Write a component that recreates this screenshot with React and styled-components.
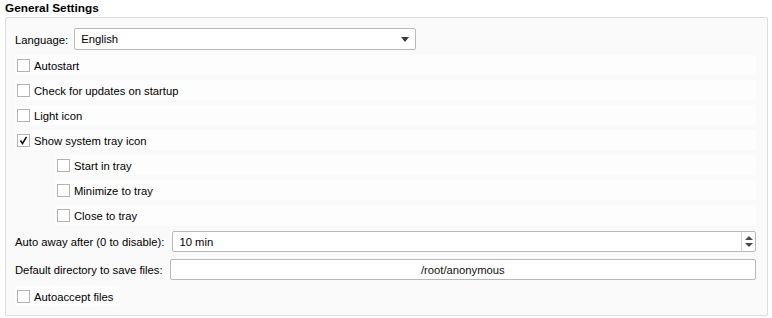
import React from 'react';
import styled, { createGlobalStyle } from 'styled-components';

const GlobalStyle = createGlobalStyle`
  html, body {
    margin: 0;
    padding: 0;
    background: #ffffff;
  }
  body {
    font-family: "Liberation Sans", Arial, sans-serif;
    font-size: 11.25px;
    color: #000;
  }
`;

const Page = styled.div`
  width: 772px;
  height: 318px;
  padding: 0 4px 0 5px;
  box-sizing: border-box;
`;

const Title = styled.div`
  height: 17px;
  line-height: 16px;
  font-weight: bold;
  font-size: 11.8px;
`;

const GroupBox = styled.div`
  height: 299px;
  box-sizing: border-box;
  border: 1px solid #dcdcdc;
  border-radius: 2px;
  background: #fafafa;
  padding: 10px 11px 0 9px;
  display: flex;
  flex-direction: column;
  gap: 5px;
`;

const FieldRow = styled.div`
  display: flex;
  align-items: center;
  height: 22px;
  gap: ${(p) => p.gap || 7}px;
  margin-top: ${(p) => p.offset || 0}px;
`;

const Label = styled.span`
  white-space: nowrap;
  padding-top: 1px;
`;

const Combo = styled.div`
  width: 342px;
  height: 22px;
  box-sizing: border-box;
  border: 1px solid #b9b9b9;
  border-radius: 2px;
  background: #fff;
  display: flex;
  align-items: center;
  justify-content: space-between;
  padding: 0 6px 0 6px;
`;

const ComboArrow = styled.span`
  width: 0;
  height: 0;
  border-left: 4.5px solid transparent;
  border-right: 4.5px solid transparent;
  border-top: 5px solid #3c3c3c;
  margin-top: 1px;
`;

const Spin = styled.div`
  flex: 1;
  height: 21px;
  box-sizing: border-box;
  border: 1px solid #b9b9b9;
  border-radius: 2px;
  background: #fff;
  display: flex;
  align-items: center;
`;

const SpinText = styled.span`
  flex: 1;
  padding-left: 6px;
  padding-top: 1px;
`;

const SpinButtons = styled.div`
  width: 13px;
  height: 100%;
  border-left: 1px solid #d0d0d0;
  display: flex;
  flex-direction: column;
  align-items: center;
  justify-content: center;
  gap: 3px;
`;

const Tri = styled.span`
  width: 0;
  height: 0;
  border-left: 4px solid transparent;
  border-right: 4px solid transparent;
  ${(p) => (p.up ? 'border-bottom: 4px solid #4a4a4a;' : 'border-top: 4px solid #4a4a4a;')}
`;

const PathField = styled.div`
  flex: 1;
  height: 21px;
  box-sizing: border-box;
  border: 1px solid #b9b9b9;
  border-radius: 2px;
  background: #fff;
  display: flex;
  align-items: center;
  justify-content: center;
  padding-top: 1px;
  color: #111;
`;

const CheckRow = styled.div`
  display: flex;
  align-items: center;
  height: 20px;
  gap: 4px;
  padding-left: 2px;
  margin-left: ${(p) => (p.indent ? 40 : 0)}px;
  background: #fdfdfd;
  align-self: ${(p) => (p.fit ? 'flex-start' : 'stretch')};
  padding-right: ${(p) => (p.fit ? 6 : 0)}px;
  margin-top: ${(p) => p.offset || 0}px;
`;

const Box = styled.span`
  width: 13px;
  height: 13px;
  box-sizing: border-box;
  border: 1px solid #b3b3b3;
  background: #fff;
  display: flex;
  align-items: center;
  justify-content: center;
`;

const Check = ({ label, checked, indent, fit, offset }) => (
  <CheckRow indent={indent} fit={fit} offset={offset}>
    <Box>
      {checked && (
        <svg width="9" height="9" viewBox="0 0 9 9">
          <path d="M1.5 4.5 L3.5 7.5 L7.5 0.8" fill="none" stroke="#111" strokeWidth="1.6" />
        </svg>
      )}
    </Box>
    <Label>{label}</Label>
  </CheckRow>
);

export default function App() {
  return (
    <Page>
      <GlobalStyle />
      <Title>General Settings</Title>
      <GroupBox>
        <FieldRow gap={6}>
          <Label>Language:</Label>
          <Combo>
            <span>English</span>
            <ComboArrow />
          </Combo>
        </FieldRow>
        <Check label="Autostart" />
        <Check label="Check for updates on startup" />
        <Check label="Light icon" />
        <Check label="Show system tray icon" checked />
        <Check label="Start in tray" indent />
        <Check label="Minimize to tray" indent />
        <Check label="Close to tray" indent />
        <FieldRow gap={8}>
          <Label>Auto away after (0 to disable):</Label>
          <Spin>
            <SpinText>10 min</SpinText>
            <SpinButtons>
              <Tri up />
              <Tri />
            </SpinButtons>
          </Spin>
        </FieldRow>
        <FieldRow gap={7} offset={1}>
          <Label>Default directory to save files:</Label>
          <PathField>/root/anonymous</PathField>
        </FieldRow>
        <Check label="Autoaccept files" fit offset={1} />
      </GroupBox>
    </Page>
  );
}
